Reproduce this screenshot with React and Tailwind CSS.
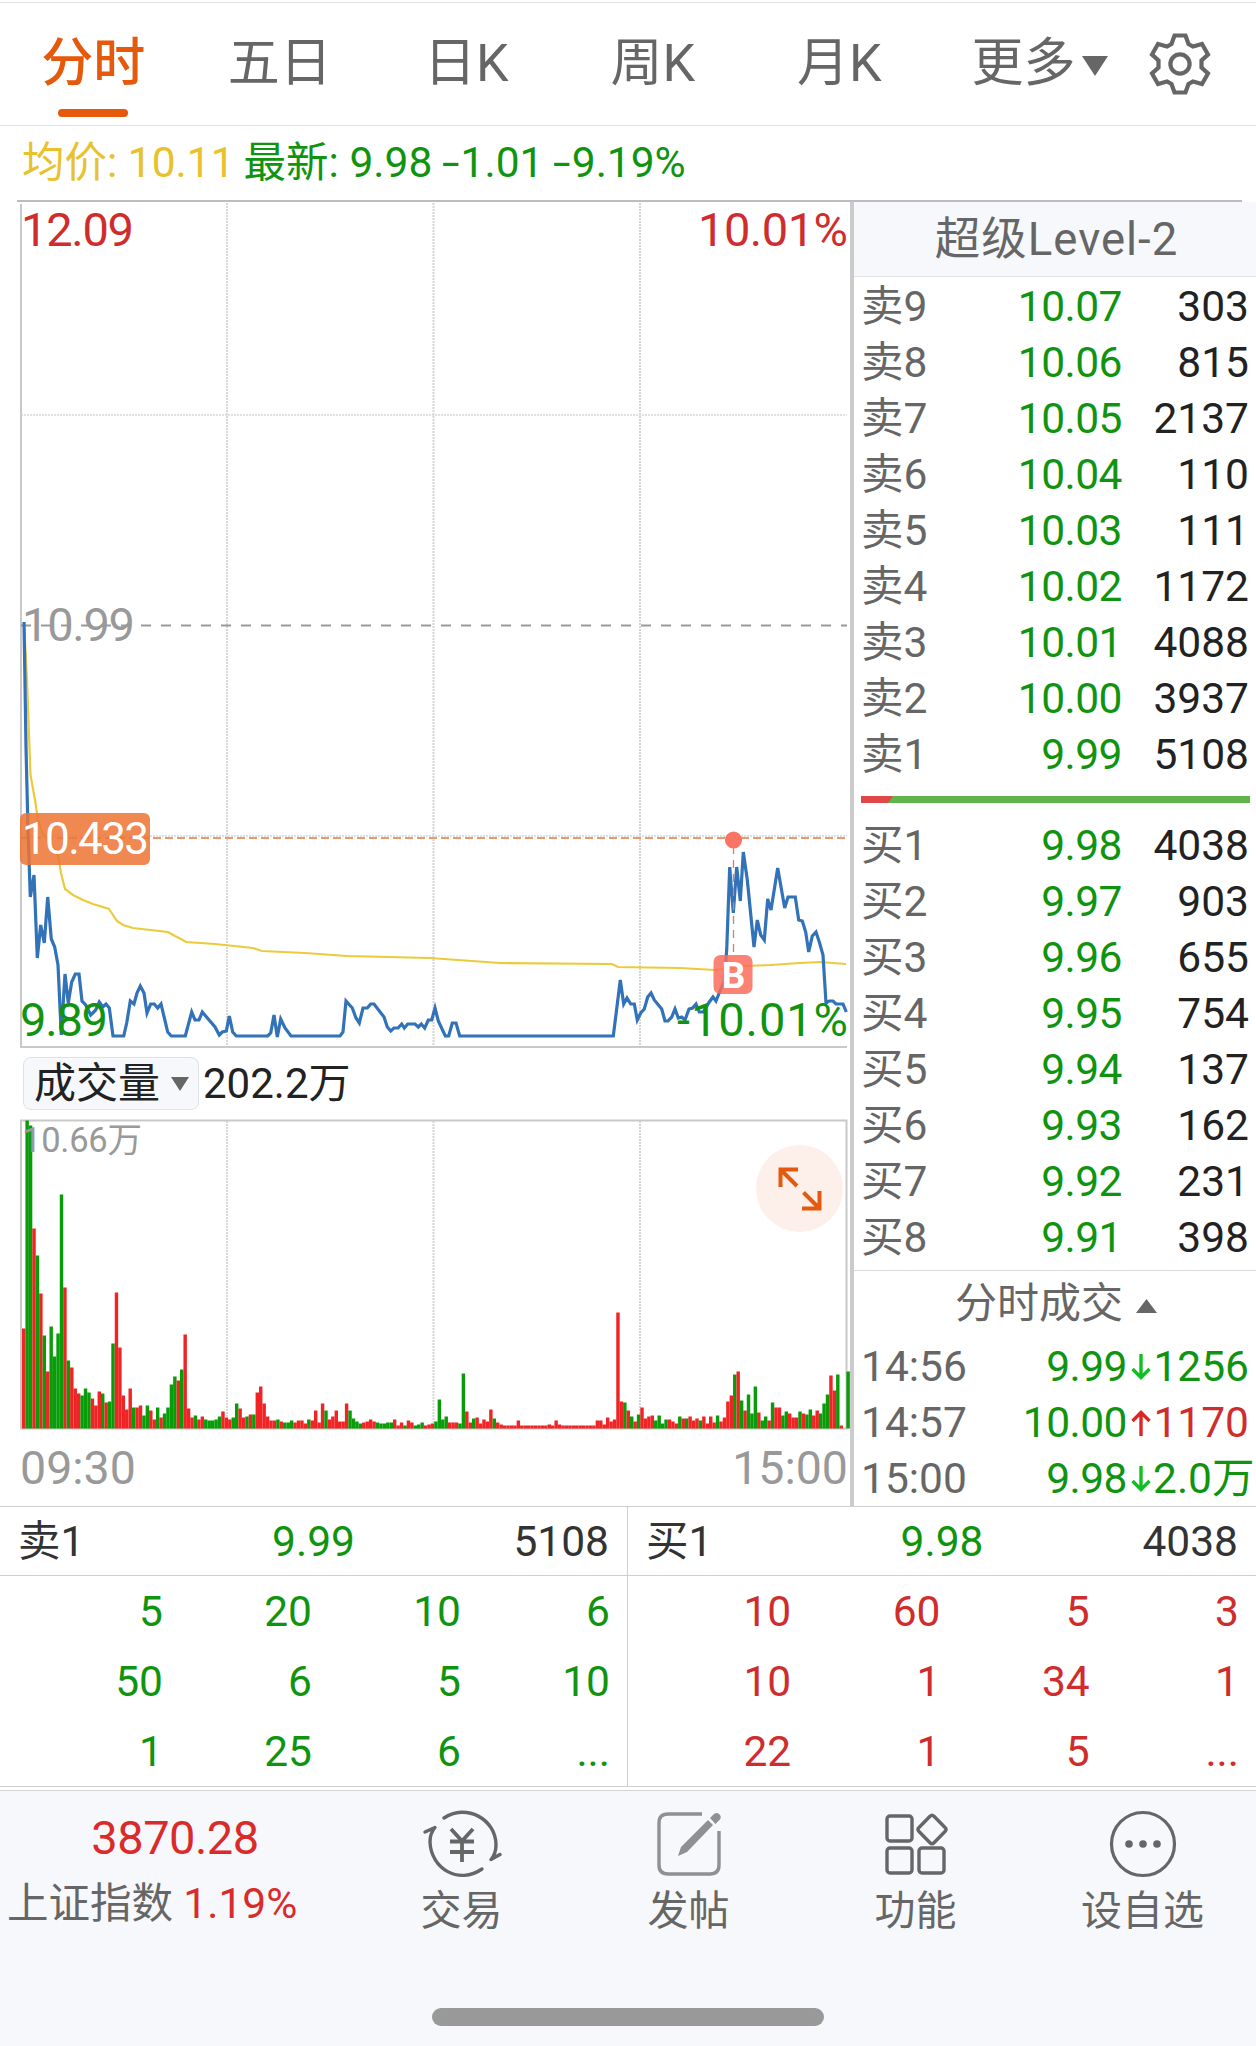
import React from "react";
import clsx from "clsx";

const tabs = ["分时", "五日", "日K", "周K", "月K"];

const asks = [
    ["卖9", "10.07", "303"],
    ["卖8", "10.06", "815"],
    ["卖7", "10.05", "2137"],
    ["卖6", "10.04", "110"],
    ["卖5", "10.03", "111"],
    ["卖4", "10.02", "1172"],
    ["卖3", "10.01", "4088"],
    ["卖2", "10.00", "3937"],
    ["卖1", "9.99", "5108"],
];

const bids = [
    ["买1", "9.98", "4038"],
    ["买2", "9.97", "903"],
    ["买3", "9.96", "655"],
    ["买4", "9.95", "754"],
    ["买5", "9.94", "137"],
    ["买6", "9.93", "162"],
    ["买7", "9.92", "231"],
    ["买8", "9.91", "398"],
];

const trades = [
    { time: "14:56", price: "9.99", up: false, volume: "1256" },
    { time: "14:57", price: "10.00", up: true, volume: "1170" },
    { time: "15:00", price: "9.98", up: false, volume: "2.0万" },
];

const queues = [
    {
        label: "卖1", price: "9.99", volume: "5108", color: "text-[#109410]",
        orders: ["5", "20", "10", "6", "50", "6", "5", "10", "1", "25", "6", "..."],
    },
    {
        label: "买1", price: "9.98", volume: "4038", color: "text-[#cf2d2d]",
        orders: ["10", "60", "5", "3", "10", "1", "34", "1", "22", "1", "5", "..."],
    },
];

const priceLine =
    "24,622 26,747 28,830 30.3,897 34,875 37.3,958 40.7,925 44.3,943 47.7,897 51.3,939 54.7,947 58,965 61.3,1035 65,974 68.3,1003 71.7,982 75.3,974 79,974 82,1001 85.7,1005 90.7,1015 95.7,1010 99.3,1002 102.7,1007 106,1004 109.3,1008 113,1036 123.7,1036 126.7,1023 130.3,1001 134,1004 137,993 140.3,986 144,993 147,1013 150.7,1004 154.3,1004 157.7,1008 161,1004 167.7,1032 171.3,1036 185.3,1036 191.7,1012 195,1020 199,1020 202.3,1012 215,1027 219.3,1035 222.3,1032 226.3,1031 229.3,1016 232.7,1032 236.3,1036 267.7,1036 270.7,1033 274,1015 277.3,1037 280.7,1019 285,1028 291,1036 340,1036 343,1032 346,1001 352.3,1008 356,1018 359.3,1023 363,1008 367.3,1008 370.7,1004 374,1004 384,1017 387.3,1027 390.7,1031 394,1028 398,1028 401.7,1024 404.3,1028 407.7,1024 415,1024 418.3,1027 421.3,1024 424.7,1028 428.3,1020 431.7,1020 435,1008 438.3,1021 445.3,1036 448.7,1036 452.3,1023 456,1023 459.7,1036 613.3,1036 620.3,980 623.7,1004 627,998 630.7,1004 634.3,1004 637.3,1020 640.7,1013 644.3,1009 647.7,997 651,993 654.3,1000 661.7,1009 665,1021 668,1021 671.7,1017 675,1009 678.3,1018 681.7,1017 685,1020 689,1009 692.7,1008 696,1004 699.3,1012 703.3,1012 709.3,1002 713,997 716,1001 720,991 724,982 726.7,950 729.7,867 733.3,913 736.7,867 740.3,901 743.3,852 747.3,880 754,947 757.3,920 760.7,935 764.3,940 767.7,899 771,910 777.7,868 784.7,908 788,897 795.3,897 798.7,920 802.3,921 805.7,932 808.7,952 812.3,936 816,932 819.3,942 823,955 826,1003 829.3,1001 833,1001 836,1004 843,1004 846.3,1012";

const averageLine =
    "24,622 27,680 30.5,775 35,800 38,820 42,832 58,855 61,873 65,889 73,895 83,900 93,904 109,909 113,915 117,921 123,925 133,928 168,932 175,936 181,939 186,942 215,944 253,948 262,951 305,953 347,956 430,958 458,960 500,963 612,964 618,967 680,968 715,970 735,968 745,966 770,965 800,963 820,962 846,964";

// one entry per minute: colour letter + bar height
const volumes =
    "R100 G308 G303 R200 G173 R135 G93 R57 G102 G72 G95 G234 R141 G68 R61 R40 R35 G33 G40 G36 R30 R23 R37 G35 R26 G27 G85 R136 R81 R33 R19 R40 G21 R21 R23 G13 G23 R18 R9 G21 R11 G15 G21 G44 G52 R48 G59 R94 R20 R11 G13 R9 R12 G9 G8 G8 G9 G12 R17 R11 R9 G11 G25 R20 R11 G12 R14 G14 R36 R42 R25 R12 R8 R8 G9 R7 G6 G6 G8 R6 R8 R8 R5 G9 R8 R18 R6 R25 G18 R9 R12 R18 R7 R7 R25 G18 G10 G7 G5 R6 R7 R9 R7 G6 G5 G5 G6 G6 R9 R3 R6 G3 R8 R6 G3 G4 G6 R3 R4 R5 G7 G29 G9 G12 R6 R6 R6 G5 G55 R17 R6 G10 R11 R5 R9 R7 R19 G10 R6 R4 R3 R3 R3 R3 R8 R3 R3 R3 R3 R3 R3 R3 R3 R4 R3 R8 R4 R3 R3 R3 R3 R3 R3 R3 R3 R3 R3 R8 R8 R4 R11 R7 R9 R116 R27 G26 R18 G12 R7 G14 R21 R10 R12 R13 G8 G13 G5 G9 R9 R7 R5 G12 R10 G10 R12 R8 R10 G8 R12 R5 R12 R6 G13 R7 R11 R27 R33 G54 R57 G28 R18 G34 G15 G42 R16 G8 G12 R8 G26 R21 R21 G13 G17 R15 R11 R11 G17 R15 G14 G19 R13 R18 G15 G25 G34 R53 R38 G54 R3 R0 G57"
        .split(" ")
        .map((v) => ({ color: v[0] === "R" ? "#f02424" : "#089c08", height: Number(v.slice(1)) }));

function GearIcon() {
    return (
        <svg width="64" height="66" viewBox="-32 -33 64 66" fill="none" stroke="#666" strokeWidth="4.2" strokeLinejoin="miter">
            <path d="M-5.500-28.500H5.500L8.500-20L13-17.500L22-20L28-9.500L21.500-3.500V3.500L28 9.500L22 20L13 17.500L8.500 20L5.500 28.500H-5.500L-8.500 20L-13 17.500L-22 20L-28 9.500L-21.500 3.500V-3.500L-28-9.500L-22-20L-13-17.500L-8.500-20Z" />
            <circle r="9.600" />
        </svg>
    );
}

function TradeIcon() {
    return (
        <svg width="80" height="72" viewBox="0 0 80 72" fill="none" stroke="#666" strokeWidth="3.4" strokeLinecap="round" strokeLinejoin="round">
            <path d="M22 10C44-5 74 11 74 37C74 43 72 48 69 51.5L78 46.500" />
            <path d="M60 61C37 77 9 61 8 34C8 28 10 23 13 19.500L3 24" />
            <path d="M29 21L40 33L51 21M28 33.500H52M28 44H52M40 33V54" strokeLinecap="butt" strokeWidth="3.8" />
        </svg>
    );
}

function PostIcon() {
    return (
        <svg width="66" height="68" viewBox="0 0 66 68" fill="none" stroke="#8f8f94" strokeWidth="3.4">
            <path d="M46 4H12Q3 4 3 13V55Q3 64 12 64H54Q63 64 63 55V21" />
            <path d="M22 46L25 37L52 10L57 15L31 42Z" fill="#8f8f94" stroke="none" />
            <path d="M54 8L58 4Q61 2 63.500 4.500Q66 7 63.500 10L59.500 14Z" fill="#8f8f94" stroke="none" />
        </svg>
    );
}

function AppsIcon() {
    return (
        <svg width="64" height="66" viewBox="0 0 64 66" fill="none" stroke="#666" strokeWidth="3.4" strokeLinejoin="round">
            <rect x="3" y="5" width="25" height="25" rx="3" />
            <rect x="3" y="37" width="25" height="25" rx="3" />
            <rect x="35" y="37" width="25" height="25" rx="3" />
            <path d="M46 5.200Q48 3.200 50 5.200L61 16.500Q63 18.500 61 20.500L50 31.800Q48 33.800 46 31.800L35 20.500Q33 18.500 35 16.500Z" />
        </svg>
    );
}

function MoreIcon() {
    return (
        <svg width="68" height="68" viewBox="0 0 68 68" fill="#666">
            <circle cx="34" cy="34" r="31.500" fill="none" stroke="#666" strokeWidth="3.2" />
            <circle cx="20" cy="34" r="3.800" />
            <circle cx="34" cy="34" r="3.800" />
            <circle cx="48" cy="34" r="3.800" />
        </svg>
    );
}

function Arrow({ up }) {
    return (
        <svg
            width="20"
            height="26"
            viewBox="0 0 20 26"
            fill="none"
            strokeWidth="3.4"
            className={clsx("ml-[4px] mr-[2px] shrink-0", up ? "rotate-180 stroke-[#dc2626]" : "stroke-[#10c020]")}
        >
            <path d="M10 0V23M1.500 15L10 23.500L18.500 15" />
        </svg>
    );
}

function Minus() {
    return <span className="ml-[2px] mr-[4px] inline-block scale-x-[1.500]">-</span>;
}

function PriceChart() {
    return (
        <svg className="block" width="833" height="848" viewBox="17 202 833 848">
            <g stroke="#d6d6d6" strokeWidth="2" strokeDasharray="2 1">
                <path d="M227 203V1046M433.500 203V1046M640 203V1046" />
                <path d="M21 415H847M21 836H847" strokeWidth="1.500" />
            </g>
            <path d="M21 204V1047H847" fill="none" stroke="#c9c9c9" strokeWidth="2" />
            <path d="M21 625.500H847" stroke="#999" strokeWidth="1.800" strokeDasharray="10 10" />
            <text x="22" y="641" fontSize="47" fill="#999" textLength="113">10.99</text>
            <path d="M21 838H847" stroke="#eb9a6c" strokeWidth="2" strokeDasharray="8 4" />
            <polyline points={averageLine} fill="none" stroke="#ebcb3c" strokeWidth="2.200" />
            <polyline points={priceLine} fill="none" stroke="#3272b8" strokeWidth="3.200" />
            <path d="M733.500 846V955" stroke="#d08070" strokeWidth="1.300" strokeDasharray="8 6" />
            <circle cx="733.500" cy="840" r="8.600" fill="#fa7466" />
            <rect x="713.500" y="955" width="39" height="39" rx="7" fill="#fa6c5c" fillOpacity="0.850" />
            <text x="733.500" y="988" fontSize="37" fontWeight="700" fill="#fff" textAnchor="middle">B</text>
            <rect x="20" y="813" width="130" height="52" rx="6" fill="#ee7434" fillOpacity="0.860" />
            <text x="22" y="854" fontSize="44" fill="#fff" textLength="127">10.433</text>
            <text x="21" y="246" fontSize="47" fill="#cf2d2d" textLength="113">12.09</text>
            <text x="848" y="246" fontSize="47" fill="#cf2d2d" textAnchor="end" textLength="150">10.01%</text>
            <text x="20" y="1036" fontSize="47" fill="#109410" textLength="88">9.89</text>
            <text x="848" y="1036" fontSize="47" fill="#109410" textAnchor="end" textLength="171">-10.01%</text>
        </svg>
    );
}

function VolumeChart() {
    return (
        <div className="relative">
            <svg className="block" width="833" height="312" viewBox="17 1118 833 312">
                <path d="M227 1121V1428M433.500 1121V1428M640 1121V1428" stroke="#d6d6d6" strokeWidth="2" strokeDasharray="2 1" />
                <rect x="21" y="1120.500" width="825.500" height="308" fill="none" stroke="#c9c9c9" strokeWidth="2" />
                {volumes.map((v, i) => (
                    <rect key={i} x={22 + i * 3.435} y={1428.5 - v.height} width="3.435" height={v.height} fill={v.color} />
                ))}
                <text x="22" y="1152" fontSize="34.500" fill="#999" textLength="120">10.66万</text>
            </svg>
            <div className="absolute right-[7px] top-[27px] size-[87px] rounded-full bg-[#fdf0ea] flex items-center justify-center">
                <svg width="44" height="44" viewBox="0 0 44 44" fill="none" stroke="#e5590d" strokeWidth="4">
                    <path d="M2.500 20V2.500H20M3 3L19 19" />
                    <path d="M24 41.500H41.500V24M41 41L25.500 25.500" />
                </svg>
            </div>
        </div>
    );
}

function BookRow({ row }) {
    return (
        <div className="flex h-14 items-center pl-[7px] pr-[7px] pt-[3px]">
            <span className="w-[100px] text-[#666]">{row[0]}</span>
            <span className="w-[161px] text-right tracking-[-0.5px] text-[#109410]">{row[1]}</span>
            <span className="flex-1 text-right text-[#222]">{row[2]}</span>
        </div>
    );
}

function NavItem({ icon, label }) {
    return (
        <div className="flex w-[227px] flex-col items-center">
            <div className="flex h-[72px] items-center">{icon}</div>
            <span className="mt-[7px] text-[41px] leading-[48px] text-[#666]">{label}</span>
        </div>
    );
}

export default function App() {
    return (
        <div className="flex h-[2046px] w-[1256px] flex-col overflow-hidden whitespace-nowrap bg-white font-['Roboto','Noto_Sans_CJK_SC',sans-serif] text-[42.500px] leading-[56px]">
            {/* TABS */}
            <div className="mt-[2px] flex h-[124px] border-y border-[#dfe3e4] text-[52px] leading-[121px] text-[#666]">
                {tabs.map((tab, i) => (
                    <div key={tab} className={clsx("relative w-[186.500px] text-center", i === 0 && "font-medium text-[#e5590d]")}>
                        {tab}
                        {i === 0 && <div className="absolute bottom-[8px] left-[58px] h-[8px] w-[70px] rounded-full bg-[#e5590d]" />}
                    </div>
                ))}
                <div className="ml-[39px] flex">
                    更多
                    <svg className="ml-[6px] mt-[53px]" width="26" height="20" viewBox="0 0 26 20" fill="#666">
                        <path d="M0 0H26L13 20Z" />
                    </svg>
                </div>
                <div className="ml-[40px] flex items-center">
                    <GearIcon />
                </div>
            </div>

            {/* QUOTE LINE */}
            <div className="flex h-[74px] items-center pb-px pl-[22px]">
                <span className="text-[#e8c22c]">均价: 10.11</span>
                <span className="ml-[9px] text-[#109410]">
                    最新: 9.98 <Minus />1.01 <Minus />9.19%
                </span>
            </div>
            <div className="ml-[17px] h-[2px] w-[1225px] bg-[#bdbdbd]" />

            <div className="flex h-[1304px]">
                {/* CHARTS */}
                <div className="w-[833px] ml-[17px]">
                    <PriceChart />
                    <div className="flex h-[68px] items-center pb-[1px] pl-[6px] text-[42px] text-[#222]">
                        <div className="flex h-[53px] w-[176px] items-center rounded-lg border border-[#dde1e8] bg-[#f6f8fb] pl-[10px]">
                            成交量
                            <svg className="ml-[11px]" width="18" height="14" viewBox="0 0 18 14" fill="#666">
                                <path d="M0 0H18L9 14Z" />
                            </svg>
                        </div>
                        <span className="ml-[4px]">202.2万</span>
                    </div>
                    <VolumeChart />
                    <div className="flex h-[76px] items-center justify-between pl-[3px] pr-[2px] text-[46.500px] text-[#999]">
                        <span>09:30</span>
                        <span>15:00</span>
                    </div>
                </div>

                {/* ORDER BOOK */}
                <div className="w-[406px] border-l-4 border-[#cbcbcb]">
                    <div className="h-[75px] border-b border-[#dfe3e4] bg-[#f6f8fb] pl-[3px] text-center text-[45.500px] leading-[75px] tracking-[1px] text-[#666]">
                        超级Level-2
                    </div>
                    {asks.map((row) => (
                        <BookRow key={row[0]} row={row} />
                    ))}
                    <svg className="mb-[13px] ml-[7px] mt-[15px] block" width="389" height="7">
                        <rect width="389" height="7" fill="#5fb54a" />
                        <path d="M0 0H32L27 7H0Z" fill="#e04848" />
                    </svg>
                    {bids.map((row) => (
                        <BookRow key={row[0]} row={row} />
                    ))}
                    <div className="mt-[6px] flex h-[66px] items-center justify-center border-t border-[#d8dadc] pl-[2px] pt-px text-[42px] text-[#666]">
                        分时成交
                        <svg className="ml-[13px] mt-[3px]" width="21" height="14" viewBox="0 0 21 14" fill="#666">
                            <path d="M0 14H21L10.500 0Z" />
                        </svg>
                    </div>
                    {trades.map((t) => (
                        <div key={t.time} className="flex h-14 items-center pl-[7px] pr-[7px] pt-[5px]">
                            <span className="flex-1 text-[#666]">{t.time}</span>
                            <span className="tracking-[-0.5px] text-[#109410]">{t.price}</span>
                            <Arrow up={t.up} />
                            <span className={clsx("w-[96px] text-right", t.up ? "text-[#cf2d2d]" : "text-[#109410]")}>{t.volume}</span>
                        </div>
                    ))}
                </div>
            </div>

            {/* ORDER QUEUES */}
            <div className="flex h-[281px] border-b border-t border-[#cfcfcf]">
                {queues.map((q, i) => (
                    <div key={q.label} className={clsx("w-[629px]", i === 0 && "border-r border-[#cfcfcf]")}>
                        <div className="grid h-[69px] grid-cols-3 items-center border-b border-[#cfcfcf] pl-[18px] pr-[18px] pt-px text-[#333]">
                            <span>{q.label}</span>
                            <span className="text-center text-[#109410]">{q.price}</span>
                            <span className="text-right">{q.volume}</span>
                        </div>
                        <div className={clsx("mt-px grid grid-cols-4 pl-[14px] pr-[17px] text-right leading-[70px]", q.color)}>
                            {q.orders.map((n, j) => (
                                <span key={j}>{n}</span>
                            ))}
                        </div>
                    </div>
                ))}
            </div>

            {/* BOTTOM BAR */}
            <div className="mt-[3px] flex-1 border-t border-[#d4d6d8] bg-[#f6f8fb]">
                <div className="flex h-[217px] pt-[17px]">
                    <div className="w-[348px] pl-[7px]">
                        <div className="mt-px w-[336px] text-center text-[47px] leading-[58px] tracking-[-0.5px] text-[#d92b2b]">3870.28</div>
                        <div className="mt-[9px] text-[41.500px] leading-[56px] text-[#666]">
                            上证指数 <span className="text-[42.500px] text-[#d92b2b]">1.19%</span>
                        </div>
                    </div>
                    <NavItem icon={<TradeIcon />} label="交易" />
                    <NavItem icon={<PostIcon />} label="发帖" />
                    <NavItem icon={<AppsIcon />} label="功能" />
                    <NavItem icon={<MoreIcon />} label="设自选" />
                </div>
                <div className="mx-auto h-[18px] w-[392px] rounded-full bg-[#999]" />
            </div>
        </div>
    );
}
